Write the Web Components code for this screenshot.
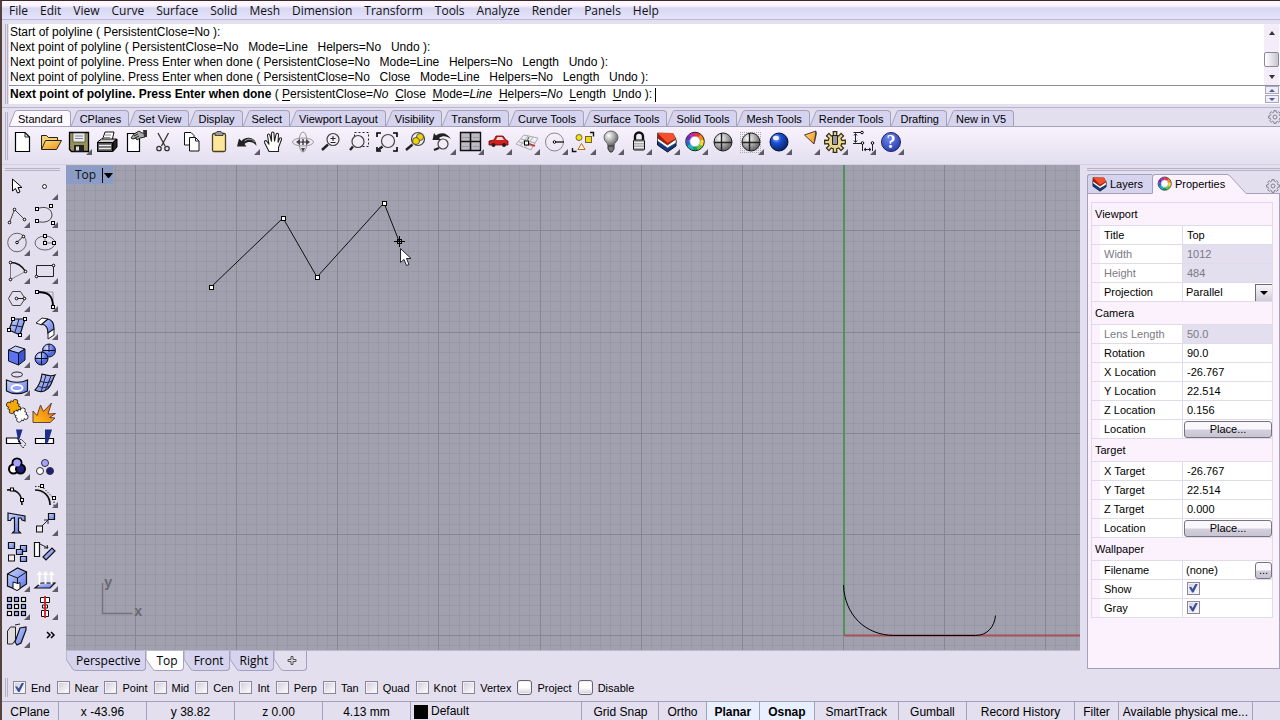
<!DOCTYPE html>
<html lang="en">

<head>
    <meta charset="UTF-8">
    <meta name="viewport" content="width=device-width, initial-scale=1.0">
    <title>Rhino</title>
    <style>
        body {
            margin: 0;
            font: 11px/14px "Liberation Sans", Arial, sans-serif;
            color: #000;
            --face: #e3dfee;
            --tab: #d5d3ee;
            --pale: #fbf2fe;
            --line: #a3a2bd;
            --ui: "Open Sans", "Noto Sans", sans-serif;
        }
    </style>
</head>

<body>
    <rhino-app></rhino-app>
</body>
<script>
    // every icon is drawn in a 28x28 box
    const sq = (x, y, s = 4) => `<rect x="${x - s / 2}" y="${y - s / 2}" width="${s}" height="${s}" fill="#fff" stroke="#000"/>`
    const dot = (x, y) => `<circle cx="${x}" cy="${y}" r="1.3" fill="#fff" stroke="#000"/>`
    const lens = (x, y, r) => `<path d="M${x - r + 1} ${y + r - 1}L6 22" stroke="#222" stroke-width="2.4"/><circle cx="${x}" cy="${y}" r="${r}" fill="#f1ecf6" stroke="#444" stroke-width="1.2"/>`
    const line = (d, c = '#222', w = 1) => `<path d="${d}" fill="none" stroke="${c}" stroke-width="${w}"/>`
    const blue = (d) => `<path d="${d}" fill="url(#blue)" stroke="#111" stroke-width="1.2"/>`
    const globe = `<circle cx="15" cy="14" r="9" fill="url(#grey)" stroke="#222"/>` + line('M6 14.5h18M13.5 5v18', '#222', 1.4)
    // outline of a cog wheel with 8 teeth, centred on 15,14
    const cog = (inner, outer) => {
        const pts = []
        for (let i = 0; i < 8; i++) {
            for (const [turn, r] of [[-.3, inner], [-.22, outer], [.22, outer], [.3, inner]]) {
                const a = (i + turn) * Math.PI / 4
                pts.push(`${(15 + r * Math.cos(a)).toFixed(2)} ${(14 + r * Math.sin(a)).toFixed(2)}`)
            }
        }
        return 'M' + pts.join('L') + 'z'
    }
    const wheel = ['#e33', '#f80', '#fd2', '#6c2', '#0a6', '#0bc', '#26d', '#72c', '#c2a'].map((c, i) => {
        const a = (i * 40 - 90) * Math.PI / 180, b = (i * 40 - 49) * Math.PI / 180
        const p = (t) => `${(15 + 7.2 * Math.cos(t)).toFixed(2)} ${(13.5 + 7.2 * Math.sin(t)).toFixed(2)}`
        return `<path d="M${p(a)}A7.2 7.2 0 0 1 ${p(b)}" fill="none" stroke="${c}" stroke-width="3.6"/>`
    }).join('') + '<circle cx="15" cy="13.5" r="9.3" fill="none" stroke="#222"/><circle cx="15" cy="13.5" r="5.2" fill="#fff" stroke="#666" stroke-width=".6"/>'
    const layers = `<path d="M5.500 10v7l10 7 8.500-6v-6l-8.500 5z" fill="#123a8c" stroke="#111"/><path d="M5.500 9v4l10 7 8.500-5v-4l-8.500 4z" fill="#fff" stroke="#333" stroke-width=".6"/><path d="M5.500 5v5l10 7 8.500-6-3-5.500z" fill="#b21808" stroke="#333" stroke-width=".7"/><path d="M5.500 5l15.500 0 2.500 5.500-8 4.500z" fill="#f5502c"/>`
    const piece = (x, y, fill) => {
        const parts = '<path d="M-4-4h8v8h-8z"/><circle cy="-5" r="2"/><circle cy="5" r="2"/><circle cx="-5" r="2"/><circle cx="5" r="2"/>'
        return `<g transform="translate(${x} ${y}) rotate(22)"><g fill="#222" stroke="#222" stroke-width="1.500">${parts}</g><g fill="${fill}">${parts}</g></g>`
    }

    const icons = {
        new: '<path d="M7.500 4.500h9.500l4.500 4.500v14.500h-14z" fill="#fff" stroke="#000" stroke-width="1.200"/>' + line('M17 4.500v4.500h4.500'),
        open: '<path d="M5.500 21v-13.500h5l2 2h9v3" fill="#f3d26b" stroke="#222"/><path d="M5.500 21.500l4-9h16l-5 9z" fill="url(#gold)" stroke="#222"/>',
        save: '<path d="M5.500 4.500h19v19h-17l-2-2z" fill="#969255" stroke="#000" stroke-width="1.300"/><path d="M9 5h12v9h-12z" fill="#e9e9f0" stroke="#444" stroke-width=".7"/><path d="M10 17h10v6.500h-10z" fill="#222"/><path d="M12 18.500h3v4h-3z" fill="#ddd"/>' + line('M11 8h8M11 10.500h8', '#888'),
        print: '<path d="M10 13l3-9h9l-2 9z" fill="#fff" stroke="#111"/><path d="M5.500 14l4-3h15l-3 3v3h-16z" fill="#ccc" stroke="#000"/><path d="M5.500 14.500h15v9h-15z" fill="#555" stroke="#000"/><path d="M21 14.500l4-3.500v8l-4 4.500z" fill="#222" stroke="#000"/>' + line('M7 17.500h12M7 20.500h12', '#eee', 1.300) + line('M13 7h6M12 9.500h6', '#888'),
        props: '<path d="M7.500 5.500h12v18h-12z" fill="#fff" stroke="#000" stroke-width="1.200"/><path d="M11 10l3-4 5-3 3 2h3v4l-5 1-3 2-1-2-3 1z" fill="#aaa" stroke="#222"/><path d="M23 2h4v7h-3z" fill="#333"/>' + line('M14 8l4-2M15 10l4-2'),
        cut: line('M10 5l7 13M20.500 5l-7 13', '#333', 1.300) + '<circle cx="11" cy="20.500" r="2.200" fill="none" stroke="#333" stroke-width="1.300"/><circle cx="19" cy="20.500" r="2.200" fill="none" stroke="#333" stroke-width="1.300"/>',
        copy: '<path d="M8.500 4.500h6.500l3 3v9.500h-9.500z" fill="#fff" stroke="#111"/><path d="M13.500 9.500h6l3.500 3.500v10h-9.500z" fill="#fff" stroke="#111"/>' + line('M19.500 9.500v3.500h3.500'),
        paste: '<rect x="8.500" y="5.500" width="13" height="18" rx="1.500" fill="#fbe69a" stroke="#4a4020" stroke-width="1.300"/><path d="M11 5.500l2-2h4l2 2v2h-8z" fill="#999" stroke="#222" stroke-width=".8"/>',
        undo: '<path d="M5 18.500l2-8 2.500 2.500c4-4.500 12-4.500 14.500 2l.5 3c-3.500-4.500-8-5-12-2l2 2.500z" fill="#222"/>' + line('M12.500 13c4-3 8-2 10 1', '#aaa'),
        pan: '<path d="M9 23.500l-4.500-9c-.5-2 1.500-2.500 2.500-1l2 3-1.500-9c0-2 2-2 2.500 0l1.500 6v-8c0-2 2.500-2 2.500 0l.5 8 1.500-7c.5-2 2.500-1.500 2.500 0l-.5 8 1.500-4c1-1.500 2.500-.5 2 1l-3 8v4z" fill="#fff" stroke="#222" stroke-width="1.100"/>',
        rotate: '<ellipse cx="15" cy="14" rx="10.500" ry="4" fill="none" stroke="#999"/><ellipse cx="15" cy="14" rx="4" ry="10" fill="none" stroke="#999"/><path d="M8 14l4-3v6zM22 14l-4-3v6zM15 24l-2-4h4z" fill="#444"/>' + line('M15 11v6M12 14h6', '#222', 1.200),
        zoom: lens(17, 11.5, 6) + line('M17 8v5M14.500 10.500h5M14.500 14.500h5'),
        zoomwin: '<rect x="10.500" y="4.500" width="14" height="14" fill="none" stroke="#222" stroke-dasharray="2 2"/>' + lens(14, 13.5, 6),
        zoomext: line('M5 9v-4h4M21 5h4v4M5 19v4h4M21 23h4v-4', '#000', 1.600) + lens(16, 13, 6.5),
        zoomsel: lens(18, 11, 6.5) + '<circle cx="20" cy="9" r="3.500" fill="#f2d500" stroke="#555"/><circle cx="16" cy="13" r="3.500" fill="#f2d500" stroke="#555"/>',
        zoomprev: lens(15, 16, 5) + '<path d="M4.500 12l1.500-7 2 2.500c5-4 11-3 15 3.500-5-3.500-8-3.500-12-1l2 2z" fill="#222"/>',
        views: '<path d="M4.500 4.500h20v18h-20z" fill="#bdbac6" stroke="#111" stroke-width="1.400"/>' + line('M14.500 4v18M4 13.500h21', '#111', 1.600) + line('M6 9.500h7M17 9.500h7M6 18.500h7M17 18.500h7', '#999'),
        car: '<path d="M5 16v-3l5-1 2-4h7l3 4 2 1v4h-19z" fill="#d3201d" stroke="#700" stroke-width=".8"/><path d="M12 12l1.500-3h4.500l2 3z" fill="#f6dada"/><circle cx="9.500" cy="17" r="2" fill="#222"/><circle cx="20" cy="17" r="2" fill="#222"/>',
        cplane: line('M4 16l8-9 14 3-7 12zM8 18l8-10M13 20l8-11M6 13.500l15 5M9 11l14 4', '#aaa') + line('M15 15l8 3', '#b33', 1.600) + sq(14.5, 15, 4) + line('M17 9l-2 4', '#484', 1.200),
        circ: '<circle cx="14.500" cy="14" r="9" fill="none" stroke="#888"/>' + line('M15 14h9', '#222', 1.400) + dot(14.5, 14),
        shapes: '<circle cx="11" cy="9.500" r="3" fill="#ffe000" stroke="#664"/><rect x="17.500" y="8.500" width="6" height="6" fill="#ffd500" stroke="#664"/><path d="M13.500 15.500l3.500 6h-7z" fill="#fff" stroke="#c60"/>' + line('M22 4.500h3.500v4M4.500 20v3.500h4', '#111', 1.400),
        bulb: '<path d="M12 18c0-4-4-4-4-8.500a7 6.500 0 0 1 14 0c0 4.500-4 4.500-4 8.500z" fill="url(#grey)" stroke="#666"/><path d="M12 18h6v3l-2 3h-2l-2-3z" fill="#777" stroke="#333"/>',
        lock: line('M11 12v-3.500a4 4 0 0 1 8 0V12', '#111', 2.400) + '<rect x="9.500" y="12" width="11" height="10" rx="1" fill="#aaa" stroke="#111"/>' + line('M10 14.500h10M10 17h10M10 19.500h10', '#eee'),
        layers, wheel,
        shade: globe,
        shadeGrid: '<path d="M3 3h23v22h-23z" fill="url(#dots)"/>' + globe,
        render: '<circle cx="15" cy="14" r="9" fill="url(#deep)" stroke="#013"/><ellipse cx="12" cy="10" rx="3" ry="2.200" fill="#eef"/>',
        spot: '<path d="M12.500 7l11.500-4-2 13z" fill="url(#gold)" stroke="#533"/><path d="M23 3l2 2-2 9z" fill="#444"/>',
        options: `<path d="${cog(7, 10.5)}" fill="#e7d58c" stroke="#332c10" stroke-width="1.200"/><path d="M12.500 7.500h5v9h-5z" fill="#999" stroke="#222"/>`,
        dims: line('M5.500 4.500h8M5 15.500h9M7.500 6v8M6 7.500l1.500-2 1.500 2M6 12.500l1.500 2 1.500-2M14.500 15v8M24.500 15v8M16 21.500h7M18 20l-2 1.500 2 1.500M21 20l2 1.500-2 1.500') + dot(14, 4.5) + dot(14.5, 15) + dot(24.5, 15),
        help: '<circle cx="15" cy="14" r="9.500" fill="url(#deep2)" stroke="#225"/><text x="15" y="20" text-anchor="middle" font-family="Liberation Serif, serif" font-weight="bold" font-size="18" fill="#fff">?</text>',

        arrow: '<path d="M10.500 6v12l3-2.500 2 4.500 2.500-1-2-4.500h4z" fill="#fff" stroke="#000"/>',
        point: '<circle cx="14.500" cy="13.500" r="2" fill="#fff" stroke="#222"/>',
        poly: line('M7.500 21.500l5-13 10 10', '#444') + dot(7.5, 21.5) + dot(12.5, 8.5) + dot(22.5, 18.5),
        curve: line('M7 8C15 4 22 8 22 14S14 23 7 20', '#444') + sq(7, 8, 3) + sq(21, 5, 3) + sq(7, 20, 3) + sq(23, 22, 3),
        circle: '<circle cx="15" cy="13.500" r="9.300" fill="none" stroke="#666"/>' + line('M15 13.500l6-6') + dot(15, 13.5) + dot(21.5, 7.5),
        ellipse: '<ellipse cx="15" cy="14" rx="10" ry="7" fill="none" stroke="#666"/>' + line('M15 7v7h9', '#777') + sq(15, 7, 3) + sq(15, 14, 3) + sq(24, 14, 3),
        arc: line('M8.500 22.500v-17', '#777') + line('M8.500 22.500l15-8', '#888') + line('M8.500 5.500c7 0 12 4 15 9', '#111', 1.400) + dot(8.5, 5.5) + dot(23.5, 14.5) + dot(8.5, 22.5),
        rect: line('M6.500 8.500h17v11h-17z') + dot(23.5, 8.5) + dot(6.500, 19.5),
        polygon: line('M6.500 13.500l4-7h8l4.500 7-4.500 7h-8z', '#444') + line('M14.500 13.500h8') + dot(14.5, 13.5) + dot(22.500, 13.5),
        fillet: line('M7 7h16v15', '#999') + line('M7 7c11 0 16 3 16 15', '#000', 1.800) + sq(7, 7, 3) + sq(23, 22, 3),
        surf: blue('M11 6h12l-5 16-11-5z') + line('M17 6l-4 13M9 12l12 2', '#222') + sq(11, 6, 3) + sq(23, 6, 3) + sq(7, 17, 3) + sq(18, 22, 3),
        sheet: '<path d="M6 10l6-5 6 1-6 6z" fill="#fff" stroke="#222"/><path d="M18 16l6 0v6l-6 4z" fill="#fff" stroke="#222"/>' + blue('M12 11l6-5c5 1 6 6 6 10l-6 4c0-4-2-8-6-9z'),
        box: '<path d="M6.500 9v11l10 4V12z" fill="#5b73f0" stroke="#111"/><path d="M6.500 9l7-4 9.500 3-6.500 4z" fill="#c3ccff" stroke="#111"/><path d="M16.500 12l6.500-4v11l-6.500 5z" fill="#3c54d8" stroke="#111"/>',
        spheres: '<circle cx="19" cy="9.500" r="6.500" fill="url(#ball)" stroke="#112"/><circle cx="11.500" cy="17.500" r="6.500" fill="url(#ball)" stroke="#112"/>' + line('M5 17.500h13M11.500 11v13M19 3v8M13 9.500h12', '#112'),
        project: '<ellipse cx="15" cy="5.500" rx="5.500" ry="2.500" fill="none" stroke="#222"/>' + blue('M4.500 11c6 3 15 3 21 0v11c-6 3.500-15 3.500-21 0z') + '<ellipse cx="15" cy="19" rx="5.500" ry="3" fill="#8fa2f5" stroke="#fff" stroke-width="2"/>',
        mesh: blue('M12 5c4 1 8 3 13 1-2 3-3 8-5 11-2 4-8 8-15 4 4-4 6-9 7-16z') + line('M16 6l-5 17M21 7l-6 15M10 12c4 2 8 2 12 0M8 17c4 2 7 2 12 0', '#223'),
        puzzle: piece(11.5, 9.5, '#f7a90c') + piece(19, 18, '#fff'),
        explode: '<path d="M3 25.500V14l4 4.500L10.500 8l3 6.500L21.500 6l-3.500 11 7.500-.5-6 4 5.500.5-5 4.500z" fill="url(#fire)" stroke="#533" stroke-width=".9"/>',
        trim: '<path d="M4.500 13h11l3 5.500h-14z" fill="#fff" stroke="#000" stroke-width="1.200"/><path d="M14 4.500h6.500l-4 13z" fill="#1d2f86"/><path d="M16 17l3-3 5 5-3 4z" fill="none" stroke="#222" stroke-dasharray="2 1"/>',
        split: '<path d="M5.500 13.500h18v5h-18z" fill="#fff" stroke="#000" stroke-width="1.200"/><path d="M15 4.500h7l-4 13-3 1z" fill="#1d2f86"/>',
        group: '<g stroke="#000" stroke-width="2"><circle cx="15" cy="10" r="4.500" fill="#a9a3ff"/><circle cx="11.500" cy="16" r="4.500" fill="#fff"/><circle cx="18.500" cy="16" r="4.500" fill="#201d80"/></g><circle cx="15" cy="10" r="3.500" fill="#a9a3ff"/>',
        ungroup: '<g stroke="#333"><circle cx="15" cy="10" r="3.500" fill="#a9a3ff"/><circle cx="10" cy="18" r="3.500" fill="#fff"/><circle cx="20" cy="18" r="3.500" fill="#201d80"/></g>',
        edit: line('M5 9c10-1 15 4 15 15', '#111', 1.600) + sq(10, 8.500, 3) + sq(20, 19, 3),
        control: line('M5 5.500h7l12 12v8', '#222').replace('/>', ' stroke-dasharray="1.500 1.500"/>') + line('M5 9c9 0 15 6 15 15', '#111', 1.700) + sq(12, 5, 3) + sq(24, 17, 3),
        text: blue('M6 4l17 3v5l-3-1-1-2-2.500 0v13l2 2h-8l2-2V8.500l-3 1-1 2H6z'),
        move: line('M11 18l7-7M18 15v-4h-4', '#222') + '<rect x="6.500" y="17" width="6" height="6" fill="#eee" stroke="#111"/>' + blue('M18.500 4.500h6v6h-6z'),
        copies: blue('M6.500 5.500h6v6h-6z') + blue('M18.500 8.500h6v6h-6z') + blue('M14.500 12.500h6v5h-6z') + blue('M18.500 19.500h6v5h-6z') + '<rect x="6.500" y="18" width="6" height="6" fill="#eee" stroke="#111"/>',
        turn: '<path d="M4.500 5.500h5v14h-5z" fill="#fff" stroke="#111" stroke-width="1.200"/>' + line('M10 7l8 4M17 8l1 3-4 0', '#222') + blue('M13 20l9-9 3 3-9 9z'),
        solid: blue('M5.500 9l10-6 9 4v12l-9 6-10-4z') + line('M5.500 9l10 4 9-6M15.500 13v6', '#111') + '<path d="M11 17l5 1.500 2-1v6l-3 2-4-2z" fill="#fff" stroke="#111"/>',
        extrude: blue('M5 23l6-5h14l-5 5z') + line('M9.500 20V9M15.500 19V9M21.500 19V9', '#fff', 1.800) + '<path d="M6.500 10l3-4 3 4zM12.500 10l3-4 3 4zM18.500 10l3-4 3 4z" fill="#fff"/>',
        array: [7, 14, 21].map(x => [6, 13, 20].map(y => `<rect x="${x - 1.5}" y="${y - 1.5}" width="4" height="4" fill="${x + y === 27 ? '#fff' : '#a6b4f8'}" stroke="#000" stroke-width="1.200"/>`).join('')).join(''),
        align: '<g fill="#fff" stroke="#111"><path d="M10.500 4.500h9v5h-9zM12.500 12h5v3h-5zM11.500 17.500h7v6h-7z"/></g>' + line('M15 3v22', '#e01818', 1.800),
        bend: '<path d="M5.500 10l3-4h5v13l-3 4h-5z" fill="#ddd" stroke="#222"/>' + blue('M13 21l5-14 6-1 0 3-5 13-4 2z') + line('M13 4l5-1', '#222'),
        more: line('M17 11l3 3-3 3M21 11l3 3-3 3', '#000', 1.500),
        gear: `<path d="${cog(5, 6.5)}" stroke="#85838f"/><circle cx="15" cy="14" r="2" stroke="#85838f"/>`
    }

    const defs = `<defs>
        <linearGradient id="blue" x1="0" y1="0" x2="1" y2="1"><stop offset="0" stop-color="#c9d5ff"/><stop offset="1" stop-color="#5f76ea"/></linearGradient>
        <linearGradient id="gold" x1="0" y1="0" x2="1" y2="1"><stop offset="0" stop-color="#ffe07a"/><stop offset="1" stop-color="#ef8e12"/></linearGradient>
        <linearGradient id="fire" x1="0" y1="1" x2="1" y2="0"><stop offset="0" stop-color="#ffc21e"/><stop offset="1" stop-color="#e8680c"/></linearGradient>
        <radialGradient id="grey" cx=".35" cy=".3" r=".7"><stop offset="0" stop-color="#fff"/><stop offset="1" stop-color="#666"/></radialGradient>
        <radialGradient id="ball" cx=".35" cy=".3"><stop offset="0" stop-color="#dfe6ff"/><stop offset="1" stop-color="#5068e0"/></radialGradient>
        <radialGradient id="deep" cx=".35" cy=".3" r=".7"><stop offset="0" stop-color="#8fb4ff"/><stop offset=".4" stop-color="#1b4fd0"/><stop offset="1" stop-color="#062470"/></radialGradient>
        <radialGradient id="deep2" cx=".4" cy=".3" r=".7"><stop offset="0" stop-color="#6f86ee"/><stop offset="1" stop-color="#2a3fb0"/></radialGradient>
        <pattern id="dots" width="2" height="2" patternUnits="userSpaceOnUse"><rect width="1" height="1" fill="#aaa"/></pattern>
    </defs>`

    const define = (name, html, setup) => customElements.define(name, class extends HTMLElement {
        constructor() {
            super()
            this.attachShadow({ mode: 'open' }).innerHTML = html
        }
        connectedCallback() {
            if (setup) setup(this.shadowRoot, this)
        }
    })

    const toolButtons = (list) => list.split(' ').map(n => `<tool-button icon="${n.replace('+', '')}"${n.endsWith('+') ? ' flyout' : ''}></tool-button>`).join('')

    // icon button; "flyout" adds the little corner mark
    define('tool-button', `
        <style>
            :host { display: block; width: 28px; height: 28px; flex: none; }
            button { display: block; width: 100%; height: 100%; padding: 0; border: 0; background: none; }
            svg { display: block; width: 100%; height: 100%; overflow: visible; }
        </style>
        <button></button>`, (root, host) => {
        const name = host.getAttribute('icon')
        const button = root.querySelector('button')
        button.setAttribute('aria-label', name)
        button.innerHTML = `<svg viewBox="0 0 28 28" fill="none">${defs}${icons[name]}${host.hasAttribute('flyout') ? '<path d="M28 21v6h-6z" fill="#5d5b66"/>' : ''}</svg>`
    })

    define('tab-icon', `
        <style>
            :host { display: block; width: 22px; height: 20px; flex: none; }
            svg { display: block; width: 100%; height: 100%; }
        </style>
        <svg viewBox="0 0 28 28" fill="none"></svg>`, (root, host) => {
        root.querySelector('svg').innerHTML = icons[host.getAttribute('icon')]
    })

    define('menu-bar', `
        <style>
            :host { display: flex; gap: 12px; height: 18px; padding-left: 7px; border-bottom: 1px solid #b9b7da; background: linear-gradient(#fdf6ff 0 25%, #d9d8f3 40%, #e4e3fb); }
            ::slotted(button) { padding: 0; border: 0; background: none; font: 12px/20px var(--ui); color: #111; }
        </style>
        <slot></slot>`)

    define('command-panel', `
        <style>
            :host { display: flex; margin-top: 4px; padding-left: 3px; font-size: 12px; line-height: 15px; }
            .grip { width: 1px; border: solid #b5b2c4; border-width: 0 1px; margin-right: 1px; }
            .box { flex: 1; min-width: 0; background: #fff; }
            .top, .prompt { display: flex; }
            .history { flex: 1; padding: 1px 0 0 1px; white-space: pre; }
            .scroll { width: 15px; display: flex; flex-direction: column; justify-content: space-between; align-items: center; padding: 7px 0 6px; margin-right: 1px; background: #f4ecf8; }
            .up, .down { width: 0; border: solid transparent; border-width: 0 3px 4px; border-bottom-color: #333; }
            .down { border-width: 4px 3px 0; border-bottom-color: transparent; border-top-color: #333; }
            .thumb { width: 13px; height: 13px; margin-top: 8px; border: 1px solid #8b8896; border-radius: 2px; background: linear-gradient(90deg, #fff, #c9c5d2); }
            .prompt { border-top: 1px solid #8f8fa8; height: 17px; align-items: center; padding: 0 0 1px 1px; }
            label { white-space: pre; }
            input { flex: 1; min-width: 0; height: 14px; padding: 0; margin-left: 3px; border: 0; border-left: 1px solid #000; background: none; font: inherit; outline: 0; }
            .spin { width: 14px; display: grid; gap: 1px; margin-right: 1px; }
            .spin button { height: 8px; padding: 0; border: 1px solid #a9a7ba; background: #f1edf8; display: grid; place-items: center; }
            .spin i { --c: #4b5f9e; border-bottom-color: var(--c); border-width: 0 3px 3px; }
            .spin .down { border-width: 3px 3px 0; border-bottom-color: transparent; border-top-color: var(--c); }
        </style>
        <div class="grip"></div>
        <div class="box">
            <div class="top">
                <div class="history"><slot></slot></div>
                <div class="scroll"><i class="up"></i><i class="thumb"></i><i class="down"></i></div>
            </div>
            <div class="prompt">
                <label for="cmd"><slot name="prompt"></slot></label>
                <input id="cmd">
                <div class="spin"><button aria-label="Up"><i class="up"></i></button><button aria-label="Down"><i class="down"></i></button></div>
            </div>
        </div>`)

    define('toolbar-tabs', `
        <style>
            :host { display: block; padding-left: 3px; margin-top: 3px; border-top: 1px solid #b9b6cb; }
            .row { display: flex; }
            .grip { width: 1px; border: solid #b5b2c4; border-width: 0 1px; margin: 4px 1px 4px 0; }
            .box { flex: 1; min-width: 0; }
            .tabs { display: flex; align-items: flex-end; height: 18px; border-bottom: 1px solid var(--line); }
            .tabs button { display: flex; padding: 0; border: 0; background: none; font: inherit; height: 16px; }
            .tabs svg { width: 9px; height: 16px; }
            .tabs span { padding-right: 7px; border-top: 1px solid var(--line); border-right: 1px solid var(--line); border-top-right-radius: 4px; background: var(--tab); height: 15px; line-height: 17px; }
            .tabs .on span { background: #fdf8ff; }
            path { fill: var(--tab); stroke: var(--line); }
            .on path { fill: #fdf8ff; }
            .gear { margin: 0 -8px -5px auto; }
            .icons { display: flex; padding: 1px 0 8px; background: linear-gradient(#f9f2fe, #e3dfee); }
            .icons tool-button:first-child { margin-left: -1px; }
        </style>
        <div class="row"><div class="grip"></div><div class="box">
            <div class="tabs"></div>
            <div class="icons"></div>
        </div></div>`, (root, host) => {
        const names = host.getAttribute('tabs').split(',')
        root.querySelector('.tabs').innerHTML = names.map((n, i) => `<button${i ? '' : ' class="on"'}><svg viewBox="0 0 9 16"><path d="M0 16.500L6 1.500Q6.500 .5 10 .5V17"/></svg><span>${n}</span></button>`).join('') + '<tool-button class="gear" icon="gear"></tool-button>'
        root.querySelector('.icons').innerHTML = toolButtons(host.getAttribute('icons'))
    })

    define('side-tools', `
        <style>
            :host { display: block; width: 64px; }
            .grip { height: 1px; border: solid #b5b2c4; border-width: 1px 0; margin: 3px 6px 2px 3px; }
            .grid { display: grid; grid-template-columns: 28px 28px; }
        </style>
        <div class="grip"></div><div class="grid"></div>`, (root, host) => {
        root.querySelector('.grid').innerHTML = toolButtons(host.getAttribute('icons'))
    })

    define('model-view', `
        <style>
            :host { display: block; position: relative; flex: 1; min-height: 0; overflow: hidden; background: #a0a0ae; }
            svg { position: absolute; inset: 0; width: 100%; height: 100%; }
            .title { position: absolute; left: 0; top: 1px; display: flex; align-items: center; height: 18px; background: #8b9dc6; }
            button { padding: 0 6px 0 9px; border: 0; background: none; font: 12px/18px var(--ui); color: #111; }
            .drop { width: 11px; height: 15px; padding: 0 0 0 1px; border-left: 1px solid #000; }
            .drop i { display: block; border: solid transparent; border-width: 5px 4px 0; border-top-color: #000; }
        </style>
        <svg></svg>
        <div class="title"><button>Top</button><button class="drop" aria-label="Viewport menu"><i></i></button></div>`, (root) => {
        const ox = 777, oy = 470, step = 10.114
        let minor = '', major = ''
        for (let i = -77; i <= 60; i++) {
            const x = Math.round(ox + i * step) + .5
            if (i % 10) minor += `M${x} 0V2000`
            else if (i) major += `M${x} 0V2000`
        }
        for (let i = -46; i <= 60; i++) {
            const y = Math.round(oy + i * step) + .5
            if (i % 10) minor += `M0 ${y}H3000`
            else major += `M0 ${y}H3000`
        }
        const pts = [[145, 122], [217, 53], [251, 112], [318, 38]]
        root.querySelector('svg').innerHTML = `
            ${line(minor, '#9797a5')}${line(major, '#878794')}
            ${line('M777.500 470v16', '#878794')}
            ${line('M778 0v470', '#4d9556', 2)}
            ${line('M778 470.500h600', '#a85058', 2)}
            ${line('M777.500 420c1 30 22 50 50 50.500h82c12 0 19-9 20-20', '#000')}
            ${line('M145 122L217 53 251 112 318 38 333 76', '#111')}
            ${pts.map(p => sq(p[0] + .5, p[1] + .5, 4)).join('')}
            <rect x="331.500" y="74.500" width="4" height="4" fill="none" stroke="#000"/>${line('M328 76.500h11M333.500 71v11', '#000')}
            <path d="M334.500 83.500v14l3.500-3 2.500 6 2.500-1-2.500-6h4.500z" fill="#fff" stroke="#223"/>
            ${line('M36.500 418v30.500h30', '#74747c', 1.500)}
            <g font-family="Liberation Mono, monospace" font-weight="bold" font-size="14" fill="#686870"><text x="38" y="422">y</text><text x="68" y="451">x</text></g>`
    })

    define('view-tabs', `
        <style>
            :host { display: flex; height: 21px; border-top: 1px solid #babacb; }
            button { display: flex; height: 20px; padding: 0; border: 0; background: none; font: 12px/20px var(--ui); }
            svg { width: 10px; height: 20px; flex: none; }
            path { fill: var(--tab); stroke: var(--line); }
            span { height: 19px; padding-right: 5px; border-bottom: 1px solid var(--line); border-right: 1px solid var(--line); border-bottom-right-radius: 4px; background: var(--tab); }
            .on path { fill: #fff; }
            .on span { background: #fff; }
            .add path { fill: var(--face); }
            .add span { padding: 4px 8px 0 3px; height: 15px; background: var(--face); }
            .add span svg { width: 11px; height: 11px; display: block; }
        </style>`, (root) => {
        const slope = '<svg viewBox="0 0 10 20"><path d="M0 -1V8L7 18.500Q8 19.500 11 19.500V-1z"/></svg>'
        for (const n of ['Perspective', 'Top', 'Front', 'Right']) {
            const b = document.createElement('button')
            if (n === 'Top') b.className = 'on'
            b.innerHTML = slope + `<span>${n}</span>`
            root.append(b)
        }
        const add = document.createElement('button')
        add.className = 'add'
        add.setAttribute('aria-label', 'New viewport')
        add.innerHTML = slope + '<span><svg viewBox="0 0 11 11"><path d="M4 1.500h2v3h3v2h-3v3h-2v-3h-3v-2h3z" style="stroke:#555"/></svg></span>'
        root.append(add)
    })

    const checkStyle = `
        input[type=checkbox] { appearance: none; box-sizing: border-box; width: 13px; height: 13px; margin: 0; border: 1px solid #8b8799; background: linear-gradient(135deg, #cfcbdb, #fff); box-shadow: inset 0 0 0 1px #f4f0f8; flex: none; }
        input[type=checkbox]:checked::after { content: ""; display: block; width: 9px; height: 9px; margin: 1px; background: #3a4f94; clip-path: polygon(0 40%, 25% 40%, 40% 62%, 75% 0, 100% 0, 50% 100%, 35% 100%); }`

    define('prop-group', `
        <style>
            :host { display: block; }
            h2 { margin: 0; padding-left: 3px; height: 22px; font: inherit; line-height: 22px; border-bottom: 1px solid #e0daea; }
        </style>
        <h2></h2><slot></slot>`, (root, host) => {
        root.querySelector('h2').textContent = host.getAttribute('name')
    })

    define('prop-row', `
        <style>
            :host { display: flex; height: 18px; line-height: 18px; border-bottom: 1px solid #e0daea; }
            label { width: 82px; margin-left: 8px; padding-left: 4px; box-sizing: border-box; background: #fff; }
            .value { flex: 1; min-width: 0; display: flex; align-items: center; justify-content: space-between; border-left: 1px solid #e0daea; background: #fff; }
            :host([kind=off]) label, :host([kind=off]) input { color: #7c7a84; }
            :host([kind=off]) .value { background: #e3dfee; }
            input:not([type=checkbox]), select { flex: 1; min-width: 0; width: 100%; height: 18px; padding: 0 0 0 4px; border: 0; background: none; font: inherit; color: #000; appearance: none; }
            select, .file { padding-left: 3px !important; }
            .arrow { width: 16px; height: 16px; border: solid #6e6b78; border-width: 1px 0 0 1px; background: linear-gradient(#f9f6fb, #cfcbd8); display: grid; place-items: center; }
            .arrow i { border: solid transparent; border-width: 4px 4px 0; border-top-color: #000; }
            button { height: 17px; flex: 1; padding: 0; margin-left: 1px; border: 1px solid #77747f; border-radius: 3px; background: linear-gradient(#faf7fc 45%, #d3cfdc 55%, #c8c4d2); font: inherit; line-height: 14px; }
            .file + button { flex: 0 0 17px; }
            ${checkStyle}
            input[type=checkbox] { margin: 0 0 2px 4px; }
        </style>
        <label for="v"></label><div class="value"></div>`, (root, host) => {
        const kind = host.getAttribute('kind')
        const value = host.getAttribute('value')
        root.querySelector('label').textContent = host.getAttribute('label')
        root.querySelector('.value').innerHTML = {
            off: `<input id="v" value="${value}" disabled>`,
            select: `<select id="v"><option>${value}</option></select><span class="arrow"><i></i></span>`,
            button: `<button id="v">${value}</button>`,
            file: `<input id="v" class="file" value="${value}"><button aria-label="Browse">...</button>`,
            check: '<input id="v" type="checkbox" checked>'
        }[kind] || `<input id="v" value="${value}">`
    })

    define('prop-panel', `
        <style>
            :host { display: flex; flex-direction: column; width: 193px; margin: 3px 0 3px 7px; }
            .grip { height: 1px; border: solid #b5b2c4; border-width: 1px 0; }
            .tabs { display: flex; align-items: flex-end; height: 23px; }
            .tabs button { display: flex; flex: none; align-items: center; box-sizing: border-box; width: 65px; height: 20px; padding: 0; border: 1px solid var(--line); border-right: 0; border-radius: 3px 0 0 0; background: var(--tab); font: inherit; white-space: nowrap; }
            .tabs .on { width: 75px; background: var(--pale); border-bottom-color: var(--pale); }
            .rest { flex: 1; min-width: 0; display: flex; height: 20px; box-sizing: border-box; border-bottom: 1px solid var(--line); }
            .rest svg { flex: none; width: 20px; height: 20px; }
            .rest tool-button { margin: -2px -6px 0 auto; }
            .body { flex: 1; border: solid var(--line); border-width: 0 1px 1px; background: var(--pale); padding: 8px 6px 0 3px; }
            .list { border: solid #e0daea; border-width: 1px 1px 0; }
        </style>
        <div class="grip"></div>
        <div class="tabs">
            <button><tab-icon icon="layers"></tab-icon>Layers</button>
            <button class="on"><tab-icon icon="wheel"></tab-icon>Properties</button>
            <div class="rest"><svg viewBox="0 0 20 20"><path d="M0 .5Q2 .5 4 3L19 19.500V20H0z" fill="#fbf2fe"/><path d="M0 .5Q2 .5 4 3L19 19.500" fill="none" stroke="#a3a2bd"/></svg><tool-button icon="gear"></tool-button></div>
        </div>
        <div class="body"><div class="list"><slot></slot></div></div>`)

    define('snap-bar', `
        <style>
            :host { display: flex; align-items: center; gap: 6px; box-sizing: border-box; height: 29px; padding: 2px 0 0 3px; }
            .grip { width: 1px; height: 19px; border: solid #b5b2c4; border-width: 0 1px; margin-right: -1px; }
            label { display: flex; align-items: center; gap: 5px; }
            ${checkStyle}
            .big input { width: 15px; height: 15px; border-radius: 3px; border-color: #66636f; background: linear-gradient(#fff 50%, #cfcbd8); }
        </style>
        <div class="grip"></div>`, (root) => {
        for (const n of ['End', 'Near', 'Point', 'Mid', 'Cen', 'Int', 'Perp', 'Tan', 'Quad', 'Knot', 'Vertex', 'Project', 'Disable']) {
            const label = document.createElement('label')
            label.innerHTML = `<input type="checkbox"${n === 'End' ? ' checked' : ''}>${n}`
            if (n === 'Project' || n === 'Disable') label.className = 'big'
            root.append(label)
        }
    })

    define('status-bar', `
        <style>
            :host { display: flex; height: 18px; border-top: 1px solid var(--line); font-size: 12px; line-height: 20px; white-space: nowrap; }
            ::slotted(*) { box-sizing: border-box; padding: 0 11px; border: 0; border-right: 1px solid var(--line); background: none; font: inherit; color: #000; text-align: center; }
            ::slotted(.plane) { width: 57px; padding: 0; }
            ::slotted(.num) { width: 88px; }
            ::slotted(.layer) { flex: 1; padding: 0 3px; text-align: left; display: flex; align-items: center; gap: 3px; }
            ::slotted(.tight) { padding: 0 8px; }
            ::slotted(.on) { padding: 0 8px; font-weight: bold; background: #e8effe; }
            ::slotted(.wide) { padding: 0 14px; }
            ::slotted(.mem) { padding: 0 4px; }
            :host::after { content: ""; width: 27px; }
        </style>
        <slot></slot>`)

    define('color-swatch', '<style>:host { width: 14px; height: 14px; margin-top: 2px; background: #000; }</style>')

    define('rhino-app', `
        <style>
            :host { display: flex; flex-direction: column; box-sizing: border-box; height: 100vh; overflow: hidden; border-top: 1px solid #3a2a2c; border-left: 2px solid #55423c; background: var(--face); }
            main { flex: 1; min-height: 0; display: flex; border-top: 1px solid #d3d0e2; }
            .work { flex: 1; min-width: 0; display: flex; flex-direction: column; }
            u { text-underline-offset: 2px; }
            .opt { margin-right: 3px; }
        </style>
        <menu-bar></menu-bar>
        <command-panel></command-panel>
        <toolbar-tabs tabs="Standard,CPlanes,Set View,Display,Select,Viewport Layout,Visibility,Transform,Curve Tools,Surface Tools,Solid Tools,Mesh Tools,Render Tools,Drafting,New in V5"
            icons="new open save+ print props cut copy paste undo+ pan rotate zoom zoomwin zoomext zoomsel zoomprev+ views+ car+ cplane+ circ+ shapes+ bulb+ lock+ layers+ wheel+ shade shadeGrid+ render+ spot+ options+ dims+ help+"></toolbar-tabs>
        <main>
            <side-tools icons="arrow point+ poly+ curve+ circle+ ellipse+ arc+ rect+ polygon+ fillet+ surf+ sheet+ box+ spheres+ project+ mesh+ puzzle explode trim split group+ ungroup edit control+ text move+ copies turn solid+ extrude+ array+ align+ bend+ more"></side-tools>
            <div class="work"><model-view></model-view><view-tabs></view-tabs></div>
            <prop-panel>
                <prop-group name="Viewport">
                    <prop-row label="Title" value="Top"></prop-row>
                    <prop-row label="Width" value="1012" kind="off"></prop-row>
                    <prop-row label="Height" value="484" kind="off"></prop-row>
                    <prop-row label="Projection" value="Parallel" kind="select"></prop-row>
                </prop-group>
                <prop-group name="Camera">
                    <prop-row label="Lens Length" value="50.0" kind="off"></prop-row>
                    <prop-row label="Rotation" value="90.0"></prop-row>
                    <prop-row label="X Location" value="-26.767"></prop-row>
                    <prop-row label="Y Location" value="22.514"></prop-row>
                    <prop-row label="Z Location" value="0.156"></prop-row>
                    <prop-row label="Location" value="Place..." kind="button"></prop-row>
                </prop-group>
                <prop-group name="Target">
                    <prop-row label="X Target" value="-26.767"></prop-row>
                    <prop-row label="Y Target" value="22.514"></prop-row>
                    <prop-row label="Z Target" value="0.000"></prop-row>
                    <prop-row label="Location" value="Place..." kind="button"></prop-row>
                </prop-group>
                <prop-group name="Wallpaper">
                    <prop-row label="Filename" value="(none)" kind="file"></prop-row>
                    <prop-row label="Show" kind="check"></prop-row>
                    <prop-row label="Gray" kind="check"></prop-row>
                </prop-group>
            </prop-panel>
        </main>
        <snap-bar></snap-bar>
        <status-bar>
            <button class="plane">CPlane</button>
            <span class="num">x -43.96</span>
            <span class="num">y 38.82</span>
            <span class="num">z 0.00</span>
            <span class="num">4.13 mm</span>
            <button class="layer"><color-swatch></color-swatch>Default</button>
            <button>Grid Snap</button>
            <button class="tight">Ortho</button>
            <button class="on">Planar</button>
            <button class="on">Osnap</button>
            <button>SmartTrack</button>
            <button>Gumball</button>
            <button class="wide">Record History</button>
            <button class="tight">Filter</button>
            <span class="mem">Available physical me...</span>
        </status-bar>`, (root) => {
        root.querySelector('menu-bar').innerHTML = ['File', 'Edit', 'View', 'Curve', 'Surface', 'Solid', 'Mesh', 'Dimension', 'Transform', 'Tools', 'Analyze', 'Render', 'Panels', 'Help'].map(n => `<button>${n}</button>`).join('')

        const done = 'Next point of polyline. Press Enter when done'
        const history = [
            ['Start of polyline', 'PersistentClose=No'],
            ['Next point of polyline', 'PersistentClose=No', 'Mode=Line', 'Helpers=No', 'Undo'],
            [done, 'PersistentClose=No', 'Mode=Line', 'Helpers=No', 'Length', 'Undo'],
            [done, 'PersistentClose=No', 'Close', 'Mode=Line', 'Helpers=No', 'Length', 'Undo']
        ]
        root.querySelector('command-panel').innerHTML = history.map(([text, ...opts]) =>
            `<div>${text} ( ${opts.map((o, i) => i < opts.length - 1 ? `<span class="opt">${o}</span>` : o).join('  ')} ):</div>`).join('') +
            `<span slot="prompt"><b>${done}</b> ( <u>P</u>ersistentClose=<i>No</i>  <u>C</u>lose  <u>M</u>ode=<i>Line</i>  <u>H</u>elpers=<i>No</i>  <u>L</u>ength  <u>U</u>ndo ):</span>`
    })
</script>

</html>
